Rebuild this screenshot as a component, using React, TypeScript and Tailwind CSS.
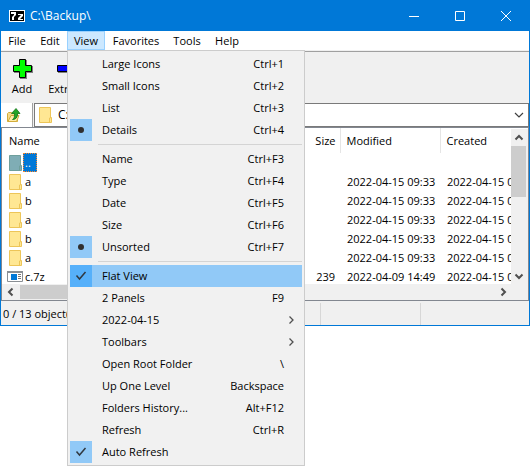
import type { ReactNode } from "react";
import { clsx } from "clsx";

type MenuEntry = {
  label: string;
  shortcut?: string;
  mark?: "dot" | "check";
  active?: boolean;
  submenu?: boolean;
};

const menuGroups: MenuEntry[][] = [
  [
    { label: "Large Icons", shortcut: "Ctrl+1" },
    { label: "Small Icons", shortcut: "Ctrl+2" },
    { label: "List", shortcut: "Ctrl+3" },
    { label: "Details", shortcut: "Ctrl+4", mark: "dot" },
  ],
  [
    { label: "Name", shortcut: "Ctrl+F3" },
    { label: "Type", shortcut: "Ctrl+F4" },
    { label: "Date", shortcut: "Ctrl+F5" },
    { label: "Size", shortcut: "Ctrl+F6" },
    { label: "Unsorted", shortcut: "Ctrl+F7", mark: "dot" },
  ],
  [
    { label: "Flat View", mark: "check", active: true },
    { label: "2 Panels", shortcut: "F9" },
    { label: "2022-04-15", submenu: true },
    { label: "Toolbars", submenu: true },
    { label: "Open Root Folder", shortcut: "\\" },
    { label: "Up One Level", shortcut: "Backspace" },
    { label: "Folders History...", shortcut: "Alt+F12" },
    { label: "Refresh", shortcut: "Ctrl+R" },
    { label: "Auto Refresh", mark: "check" },
  ],
];

type FileRow = { name: string; kind: "up" | "folder" | "archive"; size?: string; modified?: string; created?: string };

const files: FileRow[] = [
  { name: "..", kind: "up" },
  { name: "a", kind: "folder", modified: "2022-04-15 09:33", created: "2022-04-15 09:33" },
  { name: "b", kind: "folder", modified: "2022-04-15 09:33", created: "2022-04-15 09:33" },
  { name: "a", kind: "folder", modified: "2022-04-15 09:33", created: "2022-04-15 09:33" },
  { name: "b", kind: "folder", modified: "2022-04-15 09:33", created: "2022-04-15 09:33" },
  { name: "a", kind: "folder", modified: "2022-04-15 09:33", created: "2022-04-15 09:33" },
  { name: "c.7z", kind: "archive", size: "239", modified: "2022-04-09 14:49", created: "2022-04-15 09:33" },
];

function FolderIcon({ selected = false }: { selected?: boolean }) {
  const edge = selected ? "#6f9f9c" : "#edc558";
  return (
    <svg width="14" height="16" viewBox="0 0 14 16" className="shrink-0" aria-hidden="true">
      <path d="M0.500 0.500h11v10h1v5h-12z" fill={selected ? "#7fadb5" : "#ffe793"} stroke={edge} />
      <path d="M10.500 15.500v-4.500h1v-1" fill="none" stroke={edge} />
    </svg>
  );
}

function ArchiveIcon() {
  return (
    <svg width="16" height="16" viewBox="0 0 16 16" className="shrink-0" aria-hidden="true">
      <path d="M0.500 2.500h15v10h-15z" fill="#fff" stroke="#8a8f94" />
      <path d="M0 2h16v2h-16z" fill="#8a8f94" />
      <path d="M4 5h6v6h-6z" fill="#0078d7" />
      <path d="M11 5.500h3M11 7.500h3M11 9.500h3" stroke="#777" />
    </svg>
  );
}

function Chevron({ turn, thin = false, className }: { turn: string; thin?: boolean; className?: string }) {
  return (
    <svg width="10" height="10" viewBox="0 0 10 10" className={clsx(turn, className)} aria-hidden="true">
      <path d="M1.500 6.500L5 3l3.500 3.500" fill="none" stroke="#505050" strokeWidth={thin ? 1.3 : 2} />
    </svg>
  );
}

function Caption({ label, children }: { label: string; children: ReactNode }) {
  return (
    <button aria-label={label} className="flex h-full w-[46px] items-center justify-center text-white">
      <svg width="10" height="10" viewBox="0 0 10 10" fill="none" stroke="currentColor" aria-hidden="true">
        {children}
      </svg>
    </button>
  );
}

function TitleBar() {
  return (
    <header className="flex h-[31px] items-center bg-[#0078d7] pl-2 text-white">
      <svg width="16" height="12" viewBox="0 0 16 12" aria-hidden="true">
        <path d="M0 0h16v12h-16z" fill="#fff" />
        <path d="M1 1h14v10h-14z" fill="#000" />
        <path d="M2 2h5v3l-2 2v3h-2v-3l2-2v-1h-3z" fill="#fff" />
        <path d="M9 4h5v2l-3 3h3v1h-5v-2l3-3h-3z" fill="#fff" />
      </svg>
      <h1 className="grow pl-[5px] text-xs">C:\Backup\</h1>
      <Caption label="Minimize"><path d="M0 5.500h10" /></Caption>
      <Caption label="Maximize"><path d="M0.500 0.500h9v9h-9z" /></Caption>
      <Caption label="Close"><path d="M0 0l10 10M10 0L0 10" /></Caption>
    </header>
  );
}

function MenuItem({ item }: { item: MenuEntry }) {
  return (
    <button
      role="menuitem"
      className={clsx("flex h-[22px] w-full items-center text-left", item.active && "bg-[#91c9f7]")}
    >
      <span
        className={clsx(
          "flex size-[22px] items-center justify-center",
          item.active ? "bg-[#56b0fa]" : item.mark && "bg-[#91c9f7]",
        )}
      >
        {item.mark === "dot" && <span className="size-1.5 rounded-full bg-[#303030]" />}
        {item.mark === "check" && (
          <svg width="12" height="10" viewBox="0 0 12 10" aria-hidden="true">
            <path d="M1.500 4.500l3 3.500 6-7" fill="none" stroke="#303840" strokeWidth="1.500" />
          </svg>
        )}
      </span>
      <span className="grow pl-2.5">{item.label}</span>
      {item.shortcut && <span className="pr-[18px]">{item.shortcut}</span>}
      {item.submenu && <Chevron thin turn="rotate-90" className="mr-1.5" />}
    </button>
  );
}

function ViewMenu() {
  return (
    <div
      role="menu"
      aria-label="View"
      className="absolute top-full left-0 z-10 w-[238px] border border-[#ccc] bg-[#f1f1f1] p-0.5"
    >
      {menuGroups.map((group, index) => (
        <div key={index}>
          {index > 0 && <hr className="my-[3px] ml-7 border-t border-[#d4d4d4]" />}
          {group.map((item) => (
            <MenuItem key={item.label} item={item} />
          ))}
        </div>
      ))}
    </div>
  );
}

function MenuBar() {
  return (
    <nav className="flex h-[19px] bg-white">
      <button className="w-8">File</button>
      <button className="w-[34px]">Edit</button>
      <div className="relative">
        <button className="h-full w-[38px] border border-[#99d1ff] bg-[#cce8ff]">View</button>
        <ViewMenu />
      </div>
      <button className="w-[62px]">Favorites</button>
      <button className="w-10">Tools</button>
      <button className="w-10">Help</button>
    </nav>
  );
}

function ToolBar() {
  return (
    <div className="mt-px flex h-[52px] gap-1 border-t border-[#a0a0a0] pt-1.5">
      <button className="flex w-[42px] flex-col items-center gap-0.5">
        <svg width="21" height="21" viewBox="0 0 21 21" aria-hidden="true">
          <path d="M8 2h7v6h6v7h-6v6h-7v-6h-6v-7h6z" fill="#808080" />
          <path d="M7.500 1.500h6v6h6v6h-6v6h-6v-6h-6v-6h6z" fill="#00ff00" stroke="#000" />
        </svg>
        <span>Add</span>
      </button>
      <button className="flex w-[38px] flex-col items-center gap-0.5">
        <svg width="21" height="21" viewBox="0 0 21 21" aria-hidden="true">
          <path d="M2 8h19v7h-19z" fill="#808080" />
          <path d="M1.500 7.500h18v6h-18z" fill="#0000ff" stroke="#000" />
        </svg>
        <span>Extract</span>
      </button>
    </div>
  );
}

function AddressBar() {
  return (
    <div className="flex h-6 gap-px">
      <button aria-label="Up one level" className="flex w-8 items-center border-r border-[#a0a0a0] bg-white pl-1.5">
        <svg width="14" height="18" viewBox="0 0 14 18" aria-hidden="true">
          <path d="M0.500 15.500v-8l1-1h3l1 1h5v8z" fill="#f5d98a" stroke="#d3ac3a" />
          <path d="M1 15.500l3-6h8l-2.500 6z" fill="#ffedaa" stroke="#d3ac3a" />
          <path d="M5.500 13.500c2-1 2-3 2-6h-3l4.500-5 4 5h-2.500c0 4-1.500 6-5 6z" fill="#24a528" stroke="#127519" strokeWidth="0.800" />
        </svg>
      </button>
      <div className="flex grow items-center border border-[#7a7a7a] bg-white pr-1 pl-1">
        <FolderIcon />
        <select
          aria-label="Current folder"
          className="h-full grow appearance-none bg-transparent pl-[5px] text-xs outline-none"
          defaultValue="C:\Backup\"
        >
          <option>C:\Backup\</option>
        </select>
        <svg width="10" height="6" viewBox="0 0 10 6" aria-hidden="true">
          <path d="M1 1l4 4 4-4" fill="none" stroke="#404040" strokeWidth="1.200" />
        </svg>
      </div>
    </div>
  );
}

function FileTable() {
  return (
    <table className="w-[538px] table-fixed border-collapse text-left whitespace-nowrap">
      <thead>
        <tr className="h-[25px]">
          <th className="w-[278px] pl-[7px] font-normal">Name</th>
          <th className="w-[60px] border-r border-[#e5e5e5] pr-1 text-right font-normal">Size</th>
          <th className="w-[100px] border-r border-[#e5e5e5] pl-1.5 font-normal">Modified</th>
          <th className="w-[100px] pl-1.5 font-normal">Created</th>
        </tr>
      </thead>
      <tbody>
        {files.map((file, index) => (
          <tr key={index} className="h-[19px]">
            <td className="p-0">
              <div className={clsx("flex h-[19px] items-center", file.kind === "archive" ? "pl-[5px]" : "pl-[7px]")}>
                {file.kind === "archive" ? <ArchiveIcon /> : <FolderIcon selected={file.kind === "up"} />}
                <span
                  className={clsx(
                    "flex h-[19px] items-center",
                    file.kind === "up"
                      ? "w-[14px] border border-dotted border-[#ff8728] bg-[#0078d7] pl-px text-white"
                      : "pl-0.5",
                  )}
                >
                  {file.name}
                </span>
              </div>
            </td>
            <td className="p-0 pr-[5px] text-right">{file.size}</td>
            <td className="p-0 pl-[7px]">{file.modified}</td>
            <td className="p-0 pl-[7px]">{file.created}</td>
          </tr>
        ))}
      </tbody>
    </table>
  );
}

function FileList() {
  return (
    <main className="border border-[#828790] bg-white">
      <div className="flex h-[156px]">
        <div className="min-w-0 grow overflow-hidden">
          <FileTable />
        </div>
        <div className="mt-px flex w-[17px] flex-col items-center bg-[#f0f0f0] pr-0.5">
          <button aria-label="Scroll up" className="flex h-[17px] items-center"><Chevron turn="rotate-0" /></button>
          <div className="h-[51px] w-[15px] bg-[#cdcdcd]" />
          <button aria-label="Scroll down" className="mt-auto flex h-[17px] items-center"><Chevron turn="rotate-180" /></button>
        </div>
      </div>
      <div className="flex h-4 bg-[#f0f0f0] pr-[17px]">
        <button aria-label="Scroll left" className="flex w-[18px] items-center justify-center"><Chevron turn="-rotate-90" /></button>
        <div className="my-px w-[270px] bg-[#cdcdcd]" />
        <button aria-label="Scroll right" className="ml-auto flex w-[17px] items-center justify-center"><Chevron turn="rotate-90" /></button>
      </div>
    </main>
  );
}

function StatusBar() {
  return (
    <footer className="flex h-6 items-stretch pt-0.5">
      <span className="flex w-80 items-center border-r border-[#d7d7d7] pl-0.5">0 / 13 object(s) selected</span>
      <span className="w-[100px] border-r border-[#d7d7d7]" />
    </footer>
  );
}

export default function App() {
  return (
    <div className="min-h-screen bg-white font-['Open_Sans','Noto_Sans',sans-serif] text-[11px] leading-4 text-black">
      <div className="border border-t-0 border-[#0078d7] bg-[#f0f0f0]">
        <TitleBar />
        <MenuBar />
        <ToolBar />
        <AddressBar />
        <FileList />
        <StatusBar />
      </div>
    </div>
  );
}
